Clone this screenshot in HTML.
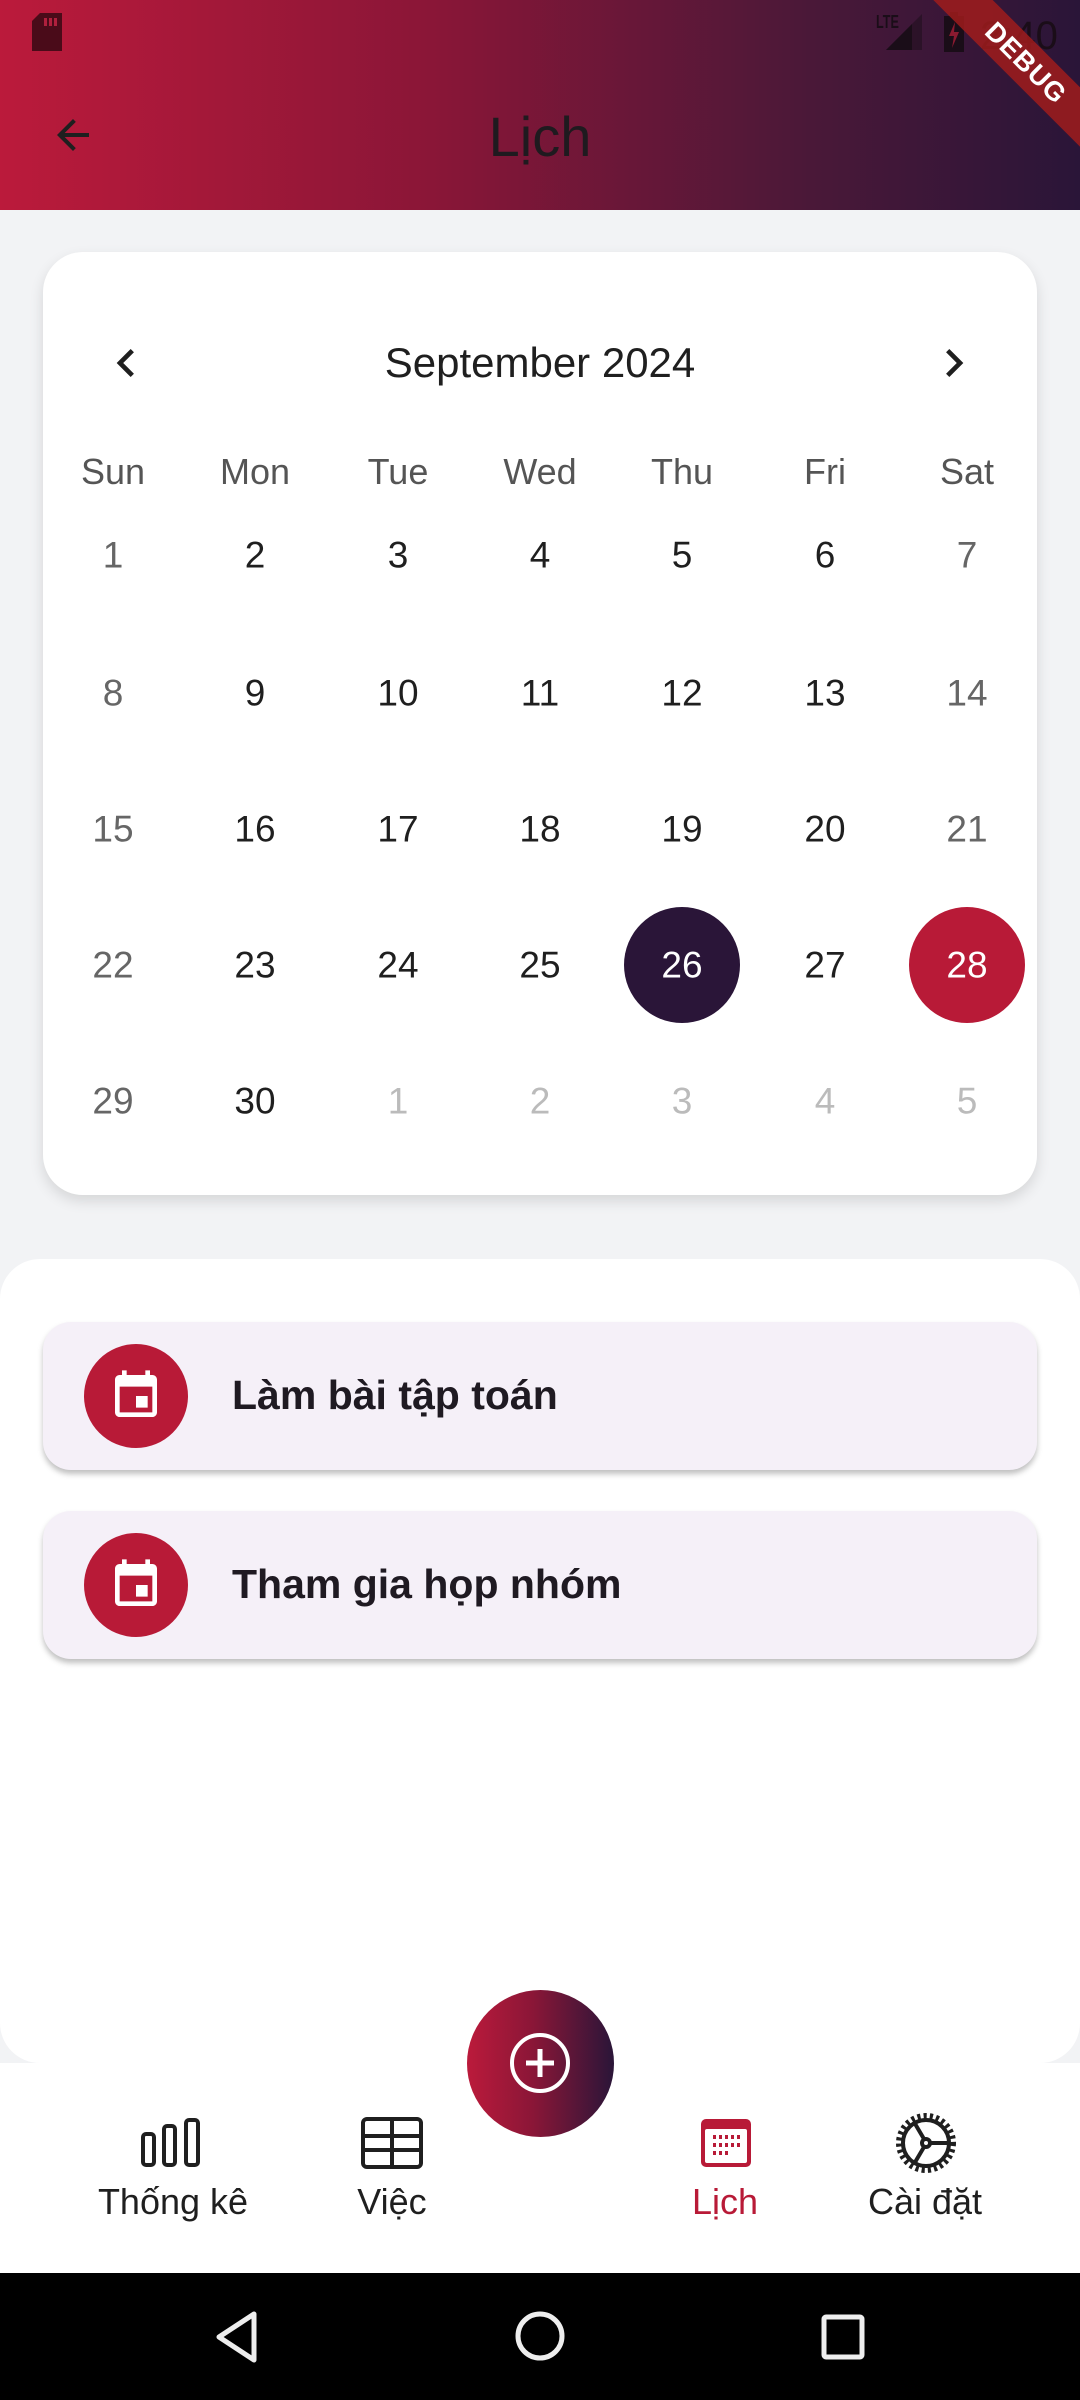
<!DOCTYPE html>
<html><head><meta charset="utf-8"><style>
*{margin:0;padding:0;box-sizing:border-box}
body{width:1080px;height:2400px;position:relative;overflow:hidden;background:#f2f3f5;font-family:"Liberation Sans",sans-serif}
.abs{position:absolute}
.c{position:absolute;transform:translate(-50%,-50%);white-space:nowrap;line-height:1}
</style></head><body>
<div class="abs" style="left:0;top:0;width:1080px;height:210px;background:linear-gradient(90deg,#bb1a3b 0%,#8a1637 40%,#4a1838 75%,#2a1538 100%)"></div>
<!-- status bar -->
<svg class="abs" style="left:32px;top:13px" width="32" height="38" viewBox="0 0 32 38"><path d="M8 0h22v38H0V8z" fill="#4a0b19"/><rect x="12" y="5" width="3" height="8" fill="#b0203d"/><rect x="17" y="5" width="3" height="8" fill="#b0203d"/><rect x="22" y="5" width="3" height="8" fill="#b0203d"/></svg>
<div class="abs" style="left:876px;top:12px;font-size:18px;font-weight:bold;color:#1a0d18;transform:scaleX(.7);transform-origin:left">LTE</div>
<svg class="abs" style="left:884px;top:12px" width="40" height="40"><path d="M38 2V38H2z" fill="#1a0d18" opacity=".5"/><path d="M28 12V38H2z" fill="#1a0d18"/></svg>
<svg class="abs" style="left:942px;top:12px" width="24" height="40"><rect x="2" y="4" width="20" height="36" fill="#1a0d18"/><rect x="8" y="0" width="8" height="4" fill="#1a0d18"/><path d="M13 10l-6 14h5l-2 12 7-16h-5z" fill="#8a1a30"/></svg>
<div class="abs" style="left:980px;top:14px;font-size:40px;color:#1a0d18">2:40</div>
<div class="abs" style="width:260px;height:42px;background:rgba(160,28,28,.85);transform:rotate(45deg);transform-origin:center;color:#fff;font-weight:bold;font-size:27px;text-align:center;line-height:42px;letter-spacing:1px;left:896px;top:42px">DEBUG</div>
<!-- app bar -->
<svg class="abs" style="left:49px;top:111px" width="48" height="48" viewBox="0 0 24 24"><path d="M20 11H7.83l5.59-5.59L12 4l-8 8 8 8 1.41-1.41L7.83 13H20v-2z" fill="#1f1f1f"/></svg>
<div class="c" style="left:540px;top:137px;font-size:56px;color:#1f1a1f">Lịch</div>
<!-- calendar card -->
<div class="abs" style="left:43px;top:252px;width:994px;height:943px;background:#fff;border-radius:40px;box-shadow:0 6px 14px rgba(0,0,0,.12)"></div>
<svg class="abs" style="left:98px;top:335px" width="56" height="56" viewBox="0 0 24 24"><path d="M15.4 7.4L14 6l-6 6 6 6 1.4-1.4L10.8 12z" fill="#1f1f1f"/></svg>
<svg class="abs" style="left:926px;top:335px" width="56" height="56" viewBox="0 0 24 24"><path d="M8.6 7.4L10 6l6 6-6 6-1.4-1.4 4.6-4.6z" fill="#1f1f1f"/></svg>
<div class="c" style="left:540px;top:363px;font-size:42px;color:#1f1f1f">September 2024</div>
<div id="cal"></div>
<!-- panel -->
<div class="abs" style="left:0;top:1259px;width:1080px;height:804px;background:#fff;border-radius:40px"></div>
<div class="abs" style="left:43px;top:1322px;width:994px;height:148px;background:#f5f0f8;border-radius:28px;box-shadow:0 4px 6px rgba(0,0,0,.25)"></div>
<div class="abs" style="left:43px;top:1511px;width:994px;height:148px;background:#f5f0f8;border-radius:28px;box-shadow:0 4px 6px rgba(0,0,0,.25)"></div>
<div class="abs" style="left:84px;top:1344px;width:104px;height:104px;border-radius:50%;background:#b81a37"></div>
<div class="abs" style="left:84px;top:1533px;width:104px;height:104px;border-radius:50%;background:#b81a37"></div>
<svg class="abs" style="left:108px;top:1368px" width="56" height="56" viewBox="0 0 24 24"><path d="M17 12h-5v5h5v-5zM16 1v2H8V1H6v2H5c-1.11 0-2 .9-2 2v14c0 1.1.89 2 2 2h14c1.1 0 2-.9 2-2V5c0-1.1-.9-2-2-2h-1V1h-2zm3 18H5V8h14v11z" fill="#fff"/></svg>
<svg class="abs" style="left:108px;top:1557px" width="56" height="56" viewBox="0 0 24 24"><path d="M17 12h-5v5h5v-5zM16 1v2H8V1H6v2H5c-1.11 0-2 .9-2 2v14c0 1.1.89 2 2 2h14c1.1 0 2-.9 2-2V5c0-1.1-.9-2-2-2h-1V1h-2zm3 18H5V8h14v11z" fill="#fff"/></svg>
<div class="abs" style="left:232px;top:1372px;font-size:41px;font-weight:bold;color:#1f1a22;line-height:46px">Làm bài tập toán</div>
<div class="abs" style="left:232px;top:1561px;font-size:41px;font-weight:bold;color:#1f1a22;line-height:46px">Tham gia họp nhóm</div>
<!-- bottom nav -->
<div class="abs" style="left:0;top:2063px;width:1080px;height:210px;background:#fff"></div>
<div class="abs" style="left:467px;top:1990px;width:147px;height:147px;border-radius:50%;background:linear-gradient(90deg,#bb1a3b,#8a1637 45%,#2a1538)"></div>
<svg class="abs" style="left:508px;top:2031px" width="64" height="64" viewBox="0 0 64 64"><circle cx="32" cy="32" r="28" fill="none" stroke="#fff" stroke-width="4"/><path d="M32 18v28M18 32h28" stroke="#fff" stroke-width="5"/></svg>
<svg class="abs" style="left:140px;top:2118px" width="66" height="50" viewBox="0 0 66 50"><g fill="none" stroke="#1f1f1f" stroke-width="4"><rect x="3" y="16" width="11" height="31" rx="3"/><rect x="24" y="8" width="11" height="39" rx="3"/><rect x="46" y="2" width="12" height="45" rx="3"/></g></svg>
<div class="c" style="left:173px;top:2202px;font-size:36px;color:#1f1f1f">Thống kê</div>
<svg class="abs" style="left:361px;top:2117px" width="62" height="52" viewBox="0 0 62 52"><g fill="none" stroke="#1f1f1f" stroke-width="4"><rect x="2" y="2" width="58" height="48" rx="4"/><path d="M2 19h58M2 33h58M31 2v48"/></g></svg>
<div class="c" style="left:392px;top:2202px;font-size:36px;color:#1f1f1f">Việc</div>
<svg class="abs" style="left:699px;top:2117px" width="54" height="52" viewBox="0 0 54 52"><rect x="2" y="2" width="50" height="48" rx="5" fill="#b81a37"/><rect x="6" y="12" width="42" height="34" rx="2" fill="#fff"/><g fill="#b81a37"><rect x="14" y="18" width="3" height="4"/><rect x="20" y="18" width="3" height="4"/><rect x="26" y="18" width="3" height="4"/><rect x="32" y="18" width="3" height="4"/><rect x="38" y="18" width="3" height="4"/><rect x="14" y="26" width="3" height="4"/><rect x="20" y="26" width="3" height="4"/><rect x="26" y="26" width="3" height="4"/><rect x="32" y="26" width="3" height="4"/><rect x="38" y="26" width="3" height="4"/><rect x="14" y="34" width="3" height="4"/><rect x="20" y="34" width="3" height="4"/><rect x="26" y="34" width="3" height="4"/></g></svg>
<div class="c" style="left:725px;top:2202px;font-size:36px;color:#b81a37">Lịch</div>
<svg class="abs" style="left:894px;top:2111px" width="64" height="64" viewBox="0 0 64 64"><g fill="none" stroke="#1f1f1f" stroke-width="4"><circle cx="32" cy="32" r="26" stroke-dasharray="3 3" stroke-width="8"/><circle cx="32" cy="32" r="23"/><circle cx="32" cy="32" r="4"/><path d="M36 32h19M30 28L20 11M30 36L20 53"/></g></svg>
<div class="c" style="left:925px;top:2202px;font-size:36px;color:#1f1f1f">Cài đặt</div>
<!-- system nav -->
<div class="abs" style="left:0;top:2273px;width:1080px;height:127px;background:#000"></div>
<svg class="abs" style="left:214px;top:2311px" width="46" height="52" viewBox="0 0 46 52"><path d="M40 3L5 26l35 23z" fill="none" stroke="#eee" stroke-width="5" stroke-linejoin="round"/></svg>
<svg class="abs" style="left:514px;top:2310px" width="52" height="52"><circle cx="26" cy="26" r="22" fill="none" stroke="#eee" stroke-width="5"/></svg>
<svg class="abs" style="left:821px;top:2314px" width="44" height="46"><rect x="3" y="3" width="38" height="40" rx="2" fill="none" stroke="#eee" stroke-width="5"/></svg>
<script>
var xs=[113,255,398,540,682,825,967],ys=[555,693,829,965,1101];
var h='';var wd=['Sun','Mon','Tue','Wed','Thu','Fri','Sat'];
for(var i=0;i<7;i++)h+='<div class="c" style="left:'+xs[i]+'px;top:472px;font-size:36px;color:#555">'+wd[i]+'</div>';
var d=1;
for(var r=0;r<5;r++)for(var i=0;i<7;i++){var t,col,other=false;
 if(d<=30){t=d;}else{t=d-30;other=true;}
 col=other?'#bbb':(i==0||i==6?'#666':'#1f1f1f');
 if(t==26&&!other){h+='<div class="abs" style="left:'+(xs[i]-58)+'px;top:'+(ys[r]-58)+'px;width:116px;height:116px;border-radius:50%;background:#2a1538"></div>';col='#fff';}
 if(t==28&&!other){h+='<div class="abs" style="left:'+(xs[i]-58)+'px;top:'+(ys[r]-58)+'px;width:116px;height:116px;border-radius:50%;background:#b81a37"></div>';col='#fff';}
 h+='<div class="c" style="left:'+xs[i]+'px;top:'+ys[r]+'px;font-size:37px;color:'+col+'">'+t+'</div>';d++;}
document.getElementById('cal').innerHTML=h;
</script>
</body></html>
